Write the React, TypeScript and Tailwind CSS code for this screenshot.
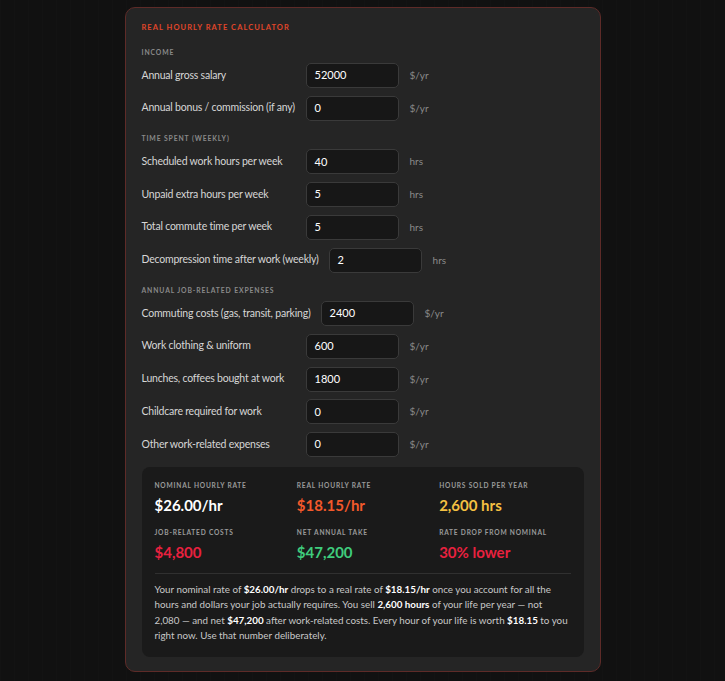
import React from "react";

type Row = { label: string; value: string; unit: string };
type Section = { title: string; rows: Row[] };

const sections: Section[] = [
  {
    title: "INCOME",
    rows: [
      { label: "Annual gross salary", value: "52000", unit: "$/yr" },
      { label: "Annual bonus / commission (if any)", value: "0", unit: "$/yr" },
    ],
  },
  {
    title: "TIME SPENT (WEEKLY)",
    rows: [
      { label: "Scheduled work hours per week", value: "40", unit: "hrs" },
      { label: "Unpaid extra hours per week", value: "5", unit: "hrs" },
      { label: "Total commute time per week", value: "5", unit: "hrs" },
      { label: "Decompression time after work (weekly)", value: "2", unit: "hrs" },
    ],
  },
  {
    title: "ANNUAL JOB-RELATED EXPENSES",
    rows: [
      { label: "Commuting costs (gas, transit, parking)", value: "2400", unit: "$/yr" },
      { label: "Work clothing & uniform", value: "600", unit: "$/yr" },
      { label: "Lunches, coffees bought at work", value: "1800", unit: "$/yr" },
      { label: "Childcare required for work", value: "0", unit: "$/yr" },
      { label: "Other work-related expenses", value: "0", unit: "$/yr" },
    ],
  },
];

const stats = [
  { label: "NOMINAL HOURLY RATE", value: "$26.00/hr", color: "text-white" },
  { label: "REAL HOURLY RATE", value: "$18.15/hr", color: "text-[#f2592b]" },
  { label: "HOURS SOLD PER YEAR", value: "2,600 hrs", color: "text-[#f4c042]" },
  { label: "JOB-RELATED COSTS", value: "$4,800", color: "text-[#e8213f]" },
  { label: "NET ANNUAL TAKE", value: "$47,200", color: "text-[#3fcc7d]" },
  { label: "RATE DROP FROM NOMINAL", value: "30% lower", color: "text-[#e8213f]" },
];

function InputRow({ row }: { row: Row }) {
  return (
    <div className="flex h-[25px] items-center">
      <div className="min-w-[154px] whitespace-nowrap text-[10.5px] tracking-[-0.02em] text-[#d6d6d6]">
        {row.label}
      </div>
      <div className="ml-[10px] flex h-[25px] w-[93px] items-center rounded-[5px] border border-[#3a3a3a] bg-[#171717] px-[8px] text-[11px] text-white">
        {row.value}
      </div>
      <div className="ml-[11px] text-[10px] text-[#8a8a8a]">{row.unit}</div>
    </div>
  );
}

export default function App() {
  return (
    <div className="min-h-[681px] w-full bg-[#111111] bg-[linear-gradient(to_right,rgba(255,255,255,0.008)_1px,transparent_1px)] bg-[size:14px_14px] pt-[7px] font-['Lato',sans-serif]">
      <div className="mx-auto w-[476px] rounded-[10px] border border-[#5e2b28] bg-[#252525] px-[16px] pb-[14px] pt-[15px]">
        <div className="h-[10px] text-[7.5px] font-bold leading-[10px] tracking-[0.14em] text-[#e0462a]">
          REAL HOURLY RATE CALCULATOR
        </div>
        <div className="mt-[14px] flex flex-col gap-[12.5px]">
          {sections.map((s) => (
            <div key={s.title}>
              <div className="mb-[6px] h-[10px] text-[6.8px] font-bold leading-[10px] tracking-[0.13em] text-[#8a8a8a]">
                {s.title}
              </div>
              <div className="flex flex-col gap-[7.75px]">
                {s.rows.map((r) => (
                  <InputRow key={r.label} row={r} />
                ))}
              </div>
            </div>
          ))}
        </div>

        <div className="mt-[10px] rounded-[8px] bg-[#1a1a1a] px-[13px] pb-[13.5px] pt-[14px]">
          <div className="grid grid-cols-3 gap-x-[11px] gap-y-[13.5px]">
            {stats.map((st) => (
              <div key={st.label}>
                <div className="h-[9px] text-[6.6px] font-bold leading-[9px] tracking-[0.12em] text-[#9a9a9a]">
                  {st.label}
                </div>
                <div className={`mt-[6px] h-[18px] text-[15px] font-bold leading-[18px] ${st.color}`}>
                  {st.value}
                </div>
              </div>
            ))}
          </div>
          <div className="mt-[12.5px] h-px bg-[#303030]" />
          <p className="pt-[7.5px] text-[9.8px] leading-[15.5px] text-[#c8c8c8]">
            <span className="block whitespace-nowrap">
              Your nominal rate of <b className="font-bold text-white">$26.00/hr</b> drops to a real rate of{" "}
              <b className="font-bold text-white">$18.15/hr</b> once you account for all the
            </span>
            <span className="block whitespace-nowrap">
              hours and dollars your job actually requires. You sell{" "}
              <b className="font-bold text-white">2,600 hours</b> of your life per year — not
            </span>
            <span className="block whitespace-nowrap">
              2,080 — and net <b className="font-bold text-white">$47,200</b> after work-related costs. Every hour of
              your life is worth <b className="font-bold text-white">$18.15</b> to you
            </span>
            <span className="block whitespace-nowrap">right now. Use that number deliberately.</span>
          </p>
        </div>
      </div>
    </div>
  );
}
